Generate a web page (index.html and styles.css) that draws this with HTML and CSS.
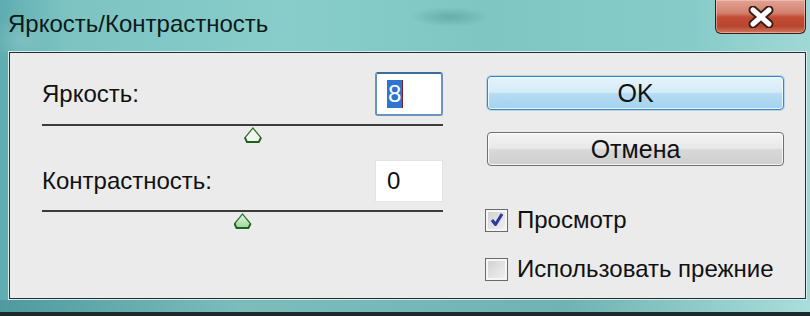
FILE: index.html
```html
<!DOCTYPE html>
<html lang="ru">

<head>
    <meta charset="UTF-8">
    <title>Яркость/Контрастность</title>
    <link rel="stylesheet" href="styles.css">
</head>

<body>

    <div class="window">
        <div class="titlebar">
            <span class="title">Яркость/Контрастность</span>
            <button class="close-btn" aria-label="Закрыть">
                <svg width="34" height="22" viewBox="0 0 34 22">
                    <path d="M9 4 L25 18 M25 4 L9 18" stroke="#3b1d18" stroke-width="9" stroke-linecap="round" fill="none"/>
                    <path d="M9 4 L25 18 M25 4 L9 18" stroke="#ffffff" stroke-width="5" stroke-linecap="round" fill="none"/>
                </svg>
            </button>
        </div>

        <div class="panel">
            <div class="controls">
                <div class="field-row first">
                    <label class="field-label">Яркость:</label>
                    <div class="num-input focused"><span class="selected">8</span><span class="caret"></span></div>
                </div>
                <div class="slider">
                    <div class="track"></div>
                    <div class="thumb-row">
                        <span class="thumb" style="margin-left: 52.6%"></span>
                    </div>
                </div>

                <div class="field-row">
                    <label class="field-label">Контрастность:</label>
                    <div class="num-input">0</div>
                </div>
                <div class="slider">
                    <div class="track"></div>
                    <div class="thumb-row">
                        <span class="thumb filled" style="margin-left: 50%"></span>
                    </div>
                </div>
            </div>

            <div class="actions">
                <button class="dlg-btn primary">OK</button>
                <button class="dlg-btn">Отмена</button>

                <label class="check first-check">
                    <span class="box">
                        <svg width="18" height="18" viewBox="0 0 18 18">
                            <path d="M4 9 L7.5 13.5 L14 3" stroke="#2a3a9c" stroke-width="3" fill="none" stroke-linejoin="round"/>
                        </svg>
                    </span>
                    Просмотр
                </label>
                <label class="check">
                    <span class="box"></span>
                    Использовать прежние
                </label>
            </div>
        </div>

        <div class="frame-bottom"></div>
    </div>

</body>

</html>
```

FILE: styles.css
```css
* {
    margin: 0;
    padding: 0;
    box-sizing: border-box;
}

body {
    width: 810px;
    height: 316px;
    overflow: hidden;
    font-family: 'Liberation Sans', Arial, sans-serif;
    color: #111;
    background-color: #1d2b2c;
}

.window {
    height: 316px;
    display: flex;
    flex-direction: column;
    background: linear-gradient(90deg, #5fadb1 0%, #7cc3c2 8%, #88cdca 35%, #7fc6c3 60%, #86cbc8 85%, #a0d8d6 100%);
}

.titlebar {
    height: 52px;
    display: flex;
    justify-content: space-between;
    align-items: flex-start;
    padding-left: 8px;
    background:
        radial-gradient(ellipse 40px 10px at 450px 17px, rgba(70, 140, 136, 0.45), transparent),
        radial-gradient(ellipse 30px 24px at 20px 40px, rgba(255, 255, 255, 0.15), transparent);
}

.title {
    font-size: 24px;
    margin-top: 10px;
    color: #0d1a1a;
}

.close-btn {
    width: 91px;
    height: 34px;
    margin-right: 4px;
    border: 1px solid #3b1c16;
    border-top: none;
    border-radius: 0 0 6px 6px;
    background: linear-gradient(180deg, #e0a394 0%, #d3806c 40%, #c24d36 52%, #b8452f 80%, #d07a5f 100%);
    box-shadow: inset 0 0 0 1px rgba(255, 210, 200, 0.5);
    display: flex;
    align-items: center;
    justify-content: center;
    cursor: pointer;
}

.panel {
    height: 247px;
    margin: 0 4px 0 9px;
    border: 1px solid #233033;
    outline: 1px solid #d4eeee;
    background-color: #ebebeb;
    display: flex;
    padding: 19px 21px 0 32px;
    gap: 42px;
}

.controls {
    width: 401px;
    display: flex;
    flex-direction: column;
}

.field-row {
    display: flex;
    justify-content: space-between;
    align-items: center;
    height: 42px;
}

.field-row.first {
    height: 44px;
}

.field-label {
    font-size: 24px;
    color: #111;
}

.num-input {
    width: 68px;
    height: 100%;
    background-color: #fff;
    border: 1px solid #e4e4e4;
    font-size: 24px;
    padding-left: 11px;
    display: flex;
    align-items: center;
}

.num-input.focused {
    border: 2px solid #6a93bf;
    border-top-color: #3f6b9c;
    border-radius: 3px;
    padding-left: 10px;
}

.selected {
    background-color: #2f74d0;
    color: #fff;
    line-height: 28px;
    padding: 0 1px;
}

.caret {
    width: 1px;
    height: 28px;
    background-color: #7a2020;
}

.slider {
    height: 44px;
    padding-top: 8px;
}

.track {
    height: 2px;
    background-color: #3c3c3c;
}

.thumb-row {
    padding-top: 1px;
}

.thumb {
    display: block;
    width: 18px;
    height: 16px;
    transform: translateX(-9px);
    background: linear-gradient(180deg, #2f7a2f, #1d5f1d);
    clip-path: polygon(50% 0, 100% 68%, 86% 100%, 14% 100%, 0 68%);
    position: relative;
}

.thumb::after {
    content: "";
    position: absolute;
    inset: 2px;
    background: #f2f5ef;
    clip-path: polygon(50% 0, 100% 70%, 88% 100%, 12% 100%, 0 70%);
}

.thumb.filled::after {
    background: linear-gradient(180deg, #e3f3e0, #9fd99c);
}

.actions {
    flex: 1;
    display: flex;
    flex-direction: column;
}

.dlg-btn {
    height: 34px;
    margin-left: 2px;
    font-family: 'Liberation Sans', Arial, sans-serif;
    font-size: 25px;
    color: #111;
    border: 1px solid #707070;
    border-radius: 4px;
    background: linear-gradient(180deg, #f4f4f4 0%, #e8e8e8 48%, #d8d8d8 52%, #cfcfcf 100%);
    box-shadow: inset 0 0 0 1px rgba(255, 255, 255, 0.8);
    cursor: pointer;
}

.dlg-btn.primary {
    margin-top: 4px;
    margin-bottom: 22px;
    border-color: #3c84be;
    background: linear-gradient(180deg, #e6f4fc 0%, #d4ebf9 48%, #b6dcf3 52%, #a4d2ef 100%);
    box-shadow: inset 0 0 0 1px rgba(240, 250, 255, 0.9), 0 0 0 1px rgba(90, 170, 220, 0.35);
}

.check {
    display: flex;
    align-items: center;
    gap: 9px;
    font-size: 24px;
    color: #111;
}

.first-check {
    margin-top: 40px;
    margin-bottom: 21px;
}

.box {
    width: 23px;
    height: 23px;
    border: 1px solid #6a6a6a;
    background: linear-gradient(135deg, #cfcfcf, #f3f3f3);
    box-shadow: inset 0 0 0 2px #f6f6f6;
    display: flex;
    align-items: center;
    justify-content: center;
}

.frame-bottom {
    flex: 1;
    margin-top: 1px;
    border-bottom: 4px solid #1d2a2b;
    background: linear-gradient(90deg, #4f9a9e 0%, #7cbdbc 30%, #6fb3b2 70%, #a9dedc 100%);
}
```
